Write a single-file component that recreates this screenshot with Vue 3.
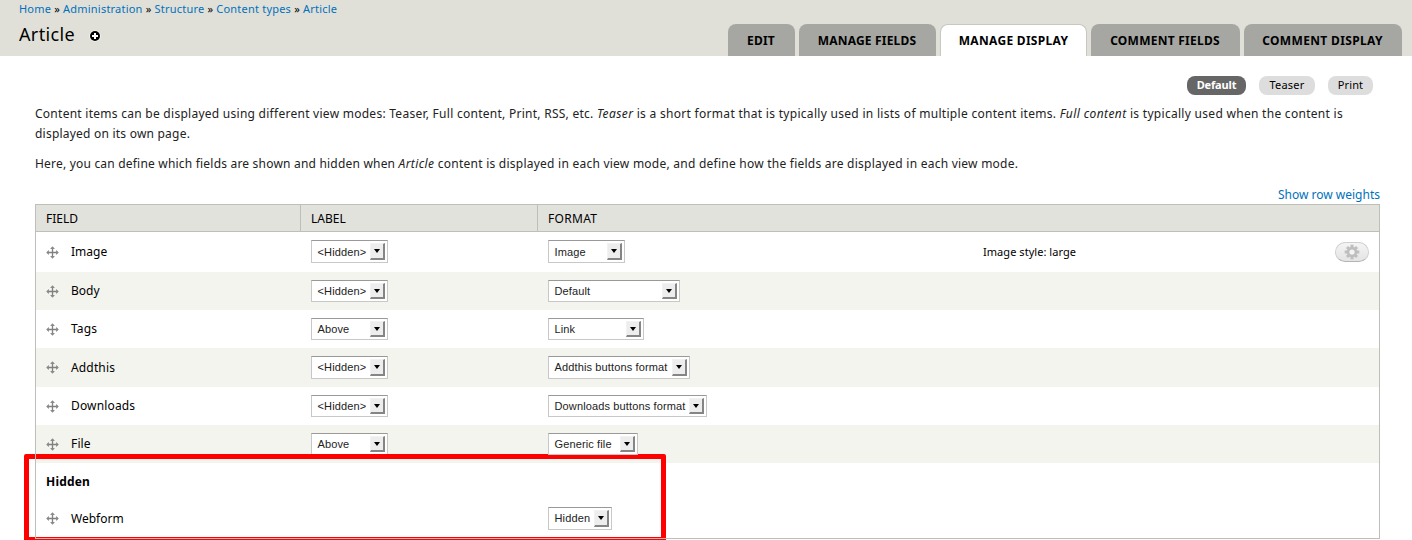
<script setup>
const crumbs = ['Home', 'Administration', 'Structure', 'Content types', 'Article']

const tabs = [
  { text: 'EDIT', key: 'edit' },
  { text: 'MANAGE FIELDS', key: 'fields' },
  { text: 'MANAGE DISPLAY', key: 'display', active: true },
  { text: 'COMMENT FIELDS', key: 'cfields' },
  { text: 'COMMENT DISPLAY', key: 'cdisplay' },
]

const rows = [
  { key: 'image', name: 'Image', label: '<Hidden>', format: 'Image', width: 77, summary: 'Image style: large' },
  { key: 'body', name: 'Body', label: '<Hidden>', format: 'Default', width: 132 },
  { key: 'tags', name: 'Tags', label: 'Above', format: 'Link', width: 96 },
  { key: 'addthis', name: 'Addthis', label: '<Hidden>', format: 'Addthis buttons format', width: 142 },
  { key: 'downloads', name: 'Downloads', label: '<Hidden>', format: 'Downloads buttons format', width: 159 },
  { key: 'file', name: 'File', label: 'Above', format: 'Generic file', width: 90 },
  { key: 'hidden', heading: 'Hidden' },
  { key: 'webform', name: 'Webform', format: 'Hidden', width: 64 },
]
</script>

<template>
  <div class="page">
    <header class="branding">
      <div class="branding-left">
        <nav class="breadcrumb">
          <template v-for="(c, i) in crumbs" :key="c"><span v-if="i"> » </span><a>{{ c }}</a></template>
        </nav>
        <h1 class="title">
          Article
          <svg class="plus" width="12" height="12" viewBox="0 0 12 12">
            <circle cx="6" cy="6" r="5.8" fill="#fff" opacity=".7" />
            <circle cx="6" cy="6" r="5" fill="#000" />
            <path d="M6 3v6M3 6h6" stroke="#fff" stroke-width="2" />
          </svg>
        </h1>
      </div>
      <ul class="tabs">
        <li v-for="t in tabs" :key="t.key" :class="['tab', t.key, { active: t.active }]">{{ t.text }}</li>
      </ul>
    </header>

    <main class="content">
      <ul class="pills">
        <li class="pill default">Default</li>
        <li class="pill teaser">Teaser</li>
        <li class="pill print">Print</li>
      </ul>

      <p class="intro">
        <span class="line"><span class="lead">Content items can be displayed using different view modes: Teaser, Full content, Print, RSS, etc. </span><em>Teaser</em><span class="mid"> is a short format that is typically used in lists of multiple content items. </span><em>Full content</em><span class="tail"> is typically used when the content is</span></span>
        <span class="line">displayed on its own page.</span>
      </p>
      <p class="intro">
        <span class="line"><span class="here">Here, you can define which fields are shown and hidden when </span><em>Article</em><span class="rest"> content is displayed in each view mode, and define how the fields are displayed in each view mode.</span></span>
      </p>

      <div class="weights"><a>Show row weights</a></div>

      <div class="table">
        <div class="head">
          <div>FIELD</div>
          <div>LABEL</div>
          <div class="wide">FORMAT</div>
        </div>
        <div v-for="r in rows" :key="r.key" :class="['row', r.key]">
          <div v-if="r.heading" class="name region">{{ r.heading }}</div>
          <template v-else>
            <div class="name">
              <svg class="drag" width="13" height="13" viewBox="0 0 13 13">
                <path d="M6.5 1v11M1 6.5h11" stroke="#808080" stroke-width="1.3" />
                <path d="M6.5 .2L8.9 2.9H4.1zM6.5 12.8L4.1 10.1h4.8zM.2 6.5L2.9 4.1v4.8zM12.8 6.5L10.1 8.9V4.1z" fill="#8a8a8a" />
              </svg>
              <span>{{ r.name }}</span>
            </div>
            <div class="cell">
              <div v-if="r.label" class="select label-select">
                <span>{{ r.label }}</span><i class="arrow"></i>
              </div>
            </div>
            <div class="cell">
              <div class="select" :style="{ width: r.width + 'px' }">
                <span>{{ r.format }}</span><i class="arrow"></i>
              </div>
            </div>
            <div class="summary">{{ r.summary }}</div>
            <div v-if="r.summary" class="gear">
              <svg width="16" height="16" viewBox="0 0 16 16">
                <g fill="#bebebe">
                  <rect x="6.5" y=".7" width="3" height="14.6" />
                  <rect x="6.5" y=".9" width="3" height="14.2" transform="rotate(45 8 8)" />
                  <rect x="6.5" y=".7" width="3" height="14.6" transform="rotate(90 8 8)" />
                  <rect x="6.5" y=".9" width="3" height="14.2" transform="rotate(135 8 8)" />
                  <circle cx="8" cy="8" r="5.2" />
                </g>
                <circle cx="8" cy="8" r="2.6" fill="#f4f4f4" />
              </svg>
            </div>
          </template>
        </div>
        <div class="marker"></div>
      </div>
    </main>
  </div>
</template>

<style>
html, body { margin: 0; overflow: hidden; background: #fff; }
</style>

<style scoped>
.page {
  width: 1412px;
  height: 540px;
  overflow: hidden;
  background: #fff;
  color: #000;
  font-family: "Noto Sans", "Open Sans", sans-serif;
  font-size: 12px;
}
ul, p, h1 { margin: 0; padding: 0; list-style: none; font-weight: normal; }
a { color: #0071bb; }

.branding {
  display: flex;
  justify-content: space-between;
  align-items: flex-end;
  box-sizing: border-box;
  height: 56px;
  padding: 0 10px 0 19px;
  background: #e0e0d8;
}
.branding-left { height: 56px; }
.breadcrumb { font-size: 11px; line-height: 18px; letter-spacing: .21px; white-space: pre; }
.title { display: flex; align-items: center; margin-top: 3px; font-size: 18px; line-height: 26px; letter-spacing: .35px; }
.plus { margin: 3px 0 0 14px; }

.tabs { display: flex; gap: 4px; }
.tab {
  box-sizing: border-box;
  height: 32px;
  padding-right: 1px;
  border-radius: 8px 8px 0 0;
  background: #a6a7a2;
  font-weight: bold;
  line-height: 33px;
  text-align: center;
  white-space: nowrap;
}
.tab.active { padding: 0; background: #fff; border: 1px solid #c8c8c2; border-bottom: 0; line-height: 31px; }
.edit { width: 67px; letter-spacing: .2px; }
.fields { width: 137px; letter-spacing: .2px; }
.display { width: 147px; letter-spacing: .3px; }
.cfields { width: 149px; letter-spacing: .25px; }
.cdisplay { width: 158px; letter-spacing: .35px; }

.content { padding: 20px 32px 0 35px; }
.pills { display: flex; justify-content: flex-end; gap: 13px; padding-right: 7px; }
.pill { height: 19px; border-radius: 8px; background: #ddd; font-size: 11px; line-height: 18px; text-align: center; }
.pill.default { width: 59px; background: #666; color: #fff; font-weight: bold; letter-spacing: -.15px; }
.pill.teaser { width: 56px; letter-spacing: .2px; }
.pill.print { width: 45px; letter-spacing: .1px; }

.intro { margin-top: 10px; color: #222; line-height: 20px; }
.pills + .intro { margin-top: 9px; }
.line { display: block; letter-spacing: .22px; white-space: nowrap; }
.line .lead { letter-spacing: .265px; }
.line .mid { letter-spacing: .295px; }
.line .tail { letter-spacing: .29px; }
.line .here { letter-spacing: .2px; }
.line .rest { letter-spacing: .24px; }
.line em { letter-spacing: .4px; }

.weights { width: 1345px; height: 20px; margin-top: 10px; line-height: 22px; text-align: right; }

.table { position: relative; box-sizing: border-box; width: 1345px; height: 335px; border: 1px solid #bebfb9; }
.table::after {
  content: "";
  position: absolute;
  inset: -1px;
  z-index: 3;
  border: 1px solid #bebfb9;
  pointer-events: none;
}
.head {
  display: grid;
  grid-template-columns: 265px 237px 1fr;
  box-sizing: border-box;
  height: 27px;
  border-bottom: 1px solid #bebfb9;
  background: #e1e2dc;
  line-height: 28px;
}
.head > div { box-sizing: border-box; height: 26px; padding-left: 10px; border-right: 1px solid #bebfb9; }
.head .wide { border-right: 0; letter-spacing: .3px; }

.row {
  display: grid;
  grid-template-columns: 275px 237px 435px 1fr auto;
  height: 38px;
  line-height: 38px;
}
.row.image { height: 40px; line-height: 40px; }
.row.body, .row.addthis, .row.file { background: #f3f4ee; }
.row.addthis { height: 39px; }
.row.hidden { height: 37px; line-height: 37px; }
.name { display: flex; align-items: center; gap: 12px; padding-left: 10px; }
.name.region { font-weight: bold; letter-spacing: .2px; }
.tags .name, .addthis .name, .file .name { letter-spacing: .15px; }
.downloads .name { letter-spacing: .15px; }
.drag { margin-top: 1px; }
.addthis .drag { margin-top: 0; }
.webform .drag { margin-top: -1px; }
.cell { padding-top: 8px; }
.webform .cell { padding-top: 7px; }
.row.file .cell:nth-child(3) { position: relative; z-index: 2; }

.select {
  display: flex;
  justify-content: space-between;
  box-sizing: border-box;
  height: 22px;
  padding: 2px 2px 2px 5.5px;
  border: 1px solid #c8c8c8;
  border-top-color: #999;
  background: #fff;
  color: #222;
  font: 11px/17px "Liberation Sans", Arial, sans-serif;
  letter-spacing: .13px;
  white-space: nowrap;
}
.label-select { width: 77px; }
.image .select, .addthis .select, .webform .select { height: 23px; line-height: 18px; }
.addthis .select, .webform .select { line-height: 17px; }
.arrow {
  display: flex;
  flex: none;
  align-items: center;
  justify-content: center;
  box-sizing: border-box;
  width: 15px;
  border: 1px solid #f2f2f2;
  border-right: 2px solid #858585;
  border-bottom: 2px solid #858585;
  background: #ededed;
}
.arrow::after { content: ""; border: 3px solid transparent; border-top: 4px solid #000; border-bottom: 0; }

.summary { font-size: 11px; letter-spacing: .05px; }
.gear {
  display: flex;
  align-items: center;
  justify-content: center;
  box-sizing: border-box;
  width: 34px;
  height: 20px;
  margin: 10px 10px 0 0;
  border: 1px solid #d0d0d0;
  border-bottom-color: #b4b4b4;
  border-radius: 10px;
  background: linear-gradient(#f4f4f4, #e4e4e4);
}

/* red highlight around the Hidden region */
.marker {
  position: absolute;
  left: -12px;
  top: 249px;
  z-index: 1;
  box-sizing: border-box;
  width: 642px;
  height: 88px;
  border: 5px solid #f00;
  border-radius: 2px;
}
</style>
